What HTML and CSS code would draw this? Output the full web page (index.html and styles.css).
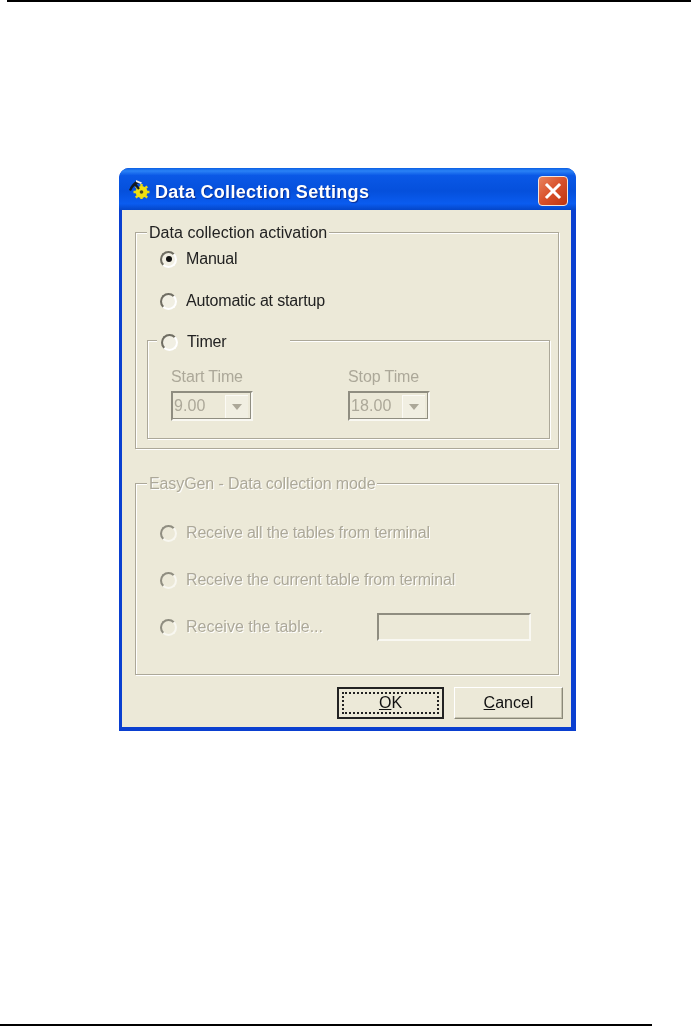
FILE: index.html
```html
<!DOCTYPE html>
<html lang="en">
<head>
<meta charset="utf-8">
<title>Data Collection Settings</title>
<link rel="stylesheet" href="styles.css">
</head>
<body>
<div class="page">
  <div class="rule-top"></div>
  <div class="dialog">
    <div class="titlebar">
      <svg class="app-icon" width="22" height="20" viewBox="0 0 22 20">
        <path d="M1 11 C3 6 6 3 9 1.500 L14 4 L10 4.500 C7 6 5 8 3 12 Z" fill="#14181f"/>
        <path d="M8 1 L14 3.500 L13 5 L8 3 Z" fill="#f0f0f0"/>
        <path d="M13.500 5v3M13.500 18v3M5.500 13h3M18.500 13h3M7.800 7.300l2.200 2.200M17 16.500l2.200 2.200M7.800 18.700l2.200-2.200M17 9.500l2.200-2.200" stroke="#eadb10" stroke-width="2.400"/>
        <circle cx="13.500" cy="13" r="6" fill="#f0e00e"/>
        <circle cx="13.500" cy="13" r="1.800" fill="#4a4a20"/>
        <path d="M7 5 L11 10" stroke="#14181f" stroke-width="2.200"/>
      </svg>
      <span class="title">Data Collection Settings</span>
      <div class="close">
        <svg width="20" height="20" viewBox="0 0 20 20"><path d="M4 4 L16 16 M16 4 L4 16" stroke="#fff" stroke-width="3" stroke-linecap="square"/></svg>
      </div>
    </div>
    <div class="body">
      <div class="group group-activation">
        <span class="legend legend-activation">Data collection activation</span>
        <div class="option"><span class="radio checked"></span><span class="tight">Manual</span></div>
        <div class="option option-second"><span class="radio"></span><span class="tight">Automatic at startup</span></div>
        <div class="timer-group">
          <div class="option timer-legend"><span class="radio"></span><span class="tight">Timer</span></div>
          <div class="timer-cols">
            <div class="timer-col">
              <div class="field-label">Start Time</div>
              <div class="combo"><span class="combo-value">9.00</span><span class="combo-btn"><span class="arrow"></span></span></div>
            </div>
            <div class="timer-col">
              <div class="field-label">Stop Time</div>
              <div class="combo"><span class="combo-value">18.00</span><span class="combo-btn"><span class="arrow"></span></span></div>
            </div>
          </div>
        </div>
      </div>
      <div class="group group-mode">
        <span class="legend legend-mode disabled">EasyGen - Data collection mode</span>
        <div class="option disabled"><span class="radio off"></span><span class="tight">Receive all the tables from terminal</span></div>
        <div class="option disabled"><span class="radio off"></span><span class="tight">Receive the current table from terminal</span></div>
        <div class="option disabled"><span class="radio off"></span><span class="table-label">Receive the table...</span><span class="text-input"></span></div>
      </div>
      <div class="footer">
        <div class="btn btn-default"><span class="focus"><u>O</u>K</span></div>
        <div class="btn"><span><u>C</u>ancel</span></div>
      </div>
    </div>
  </div>
  <div class="rule-bottom"></div>
</div>
</body>
</html>
```

FILE: styles.css
```css
* { box-sizing: border-box; }
html, body { margin: 0; padding: 0; background: #fff; }
body { font-family: "Liberation Sans", Arial, sans-serif; }
.page { width: 694px; height: 1026px; display: flex; flex-direction: column; overflow: hidden; }
.rule-top { height: 2px; margin-left: 7px; margin-right: 3px; background: #000; flex: none; }
.rule-bottom { height: 2px; width: 652px; margin-top: auto; background: #000; flex: none; }

.dialog { width: 457px; height: 563px; margin: 166px 0 0 119px; flex: none; display: flex; flex-direction: column; border-radius: 10px 10px 0 0; background: #0a3fd0; filter: blur(0.6px); }
.titlebar { height: 42px; flex: none; display: flex; align-items: center; padding: 4px 8px 0 9px; border-radius: 10px 10px 0 0; background: linear-gradient(#0a5fe4 0, #2a82f6 7%, #0a58e6 18%, #0550dc 55%, #0a5cf0 85%, #0446c8 100%); }
.app-icon { flex: none; margin-top: -4px; }
.title { margin: 2px 0 0 5px; color: #fff; font-size: 18px; font-weight: 700; letter-spacing: 0.3px; text-shadow: 1px 1px 1px #0a2c90; }
.close { width: 30px; height: 30px; margin-left: auto; display: flex; align-items: center; justify-content: center; border: 1px solid #f2e4dc; border-radius: 4px; background: linear-gradient(135deg, #e9835e, #d8502a 50%, #bf3410); }

.body { flex: 1; margin: 0 5px 4px 3px; background: #ece9d8; padding: 22px 0 0 13px; display: flex; flex-direction: column; font-size: 16px; color: #222; }
.group { position: relative; width: 424px; border: 1px solid #aca899; box-shadow: 1px 1px 0 #fff, inset 1px 1px 0 #fff; flex: none; }
.group-activation { height: 217px; padding: 16px 0 0 24px; }
.group-mode { height: 192px; margin-top: 34px; padding: 39px 0 0 24px; display: flex; flex-direction: column; gap: 27px; }
.legend { position: absolute; top: -10px; left: 11px; padding: 0 2px; height: 20px; line-height: 20px; background: #ece9d8; white-space: nowrap; }
.legend-activation { letter-spacing: 0.05px; }
.legend-mode { letter-spacing: -0.1px; }
.tight { letter-spacing: -0.17px; }

.option { display: flex; align-items: center; height: 20px; white-space: nowrap; }
.option-second { margin-top: 22px; }
.radio { position: relative; width: 17px; height: 17px; margin-right: 9px; flex: none; border-radius: 50%; border: 2px solid; border-color: #6f6d62 #fff #fff #6f6d62; background: #f1efe3; }
.radio.off { border-color: #8f8d80 #f8f7f0 #f8f7f0 #8f8d80; background: #ece9d8; }
.radio.checked::after { content: ""; position: absolute; left: 3.500px; top: 3.500px; width: 6px; height: 6px; border-radius: 50%; background: #111; }
.disabled { color: #aca899; text-shadow: 1px 1px 0 #fff; }

.timer-group { position: relative; width: 403px; height: 99px; margin: 29px 0 0 -13px; border: 1px solid #aca899; box-shadow: 1px 1px 0 #fff, inset 1px 1px 0 #fff; padding: 26px 0 0 23px; }
.timer-legend { position: absolute; top: -9px; left: 9px; width: 133px; padding-left: 4px; background: #ece9d8; }
.timer-cols { display: flex; gap: 95px; }
.timer-col { width: 82px; }
.field-label { height: 20px; line-height: 20px; color: #aca899; letter-spacing: -0.1px; }
.combo { width: 82px; height: 30px; margin-top: 4px; display: flex; align-items: center; justify-content: space-between; padding-right: 2px; border: 2px solid; border-color: #8f8d80 #8f8d80 #f9f8f2 #8f8d80; border-right-color: #f9f8f2; color: #aca899; background: #ece9d8; box-shadow: inset -1px -1px 0 #8f8d80; }
.combo-value { padding-left: 1px; letter-spacing: 0.1px; }
.combo-btn { width: 23px; height: 23px; margin-right: 1px; display: flex; align-items: center; justify-content: center; background: #f1efe2; border-top: 1px solid #fbfaf5; border-left: 1px solid #fbfaf5; }
.arrow { width: 0; height: 0; border-left: 5px solid transparent; border-right: 5px solid transparent; border-top: 6px solid #aca899; }

.table-label { width: 191px; }
.text-input { width: 154px; height: 28px; margin: -4px 0; flex: none; border: 2px solid; border-color: #8f8d80 #f9f8f2 #f9f8f2 #8f8d80; text-shadow: none; }

.footer { display: flex; justify-content: flex-end; gap: 10px; margin-top: 12px; padding-right: 8px; }
.btn { width: 109px; height: 32px; display: flex; align-items: center; justify-content: center; border: 1px solid; border-color: #fff #8a8878 #8a8878 #fff; box-shadow: inset -1px -1px 0 #c4c1ae; background: #ece9d8; color: #111; font-size: 16px; }
.btn-default { width: 107px; border: 2px solid #222; box-shadow: none; padding: 3px; }
.focus { flex: 1; height: 100%; display: flex; align-items: center; justify-content: center; border: 2px dotted #222; }
```
